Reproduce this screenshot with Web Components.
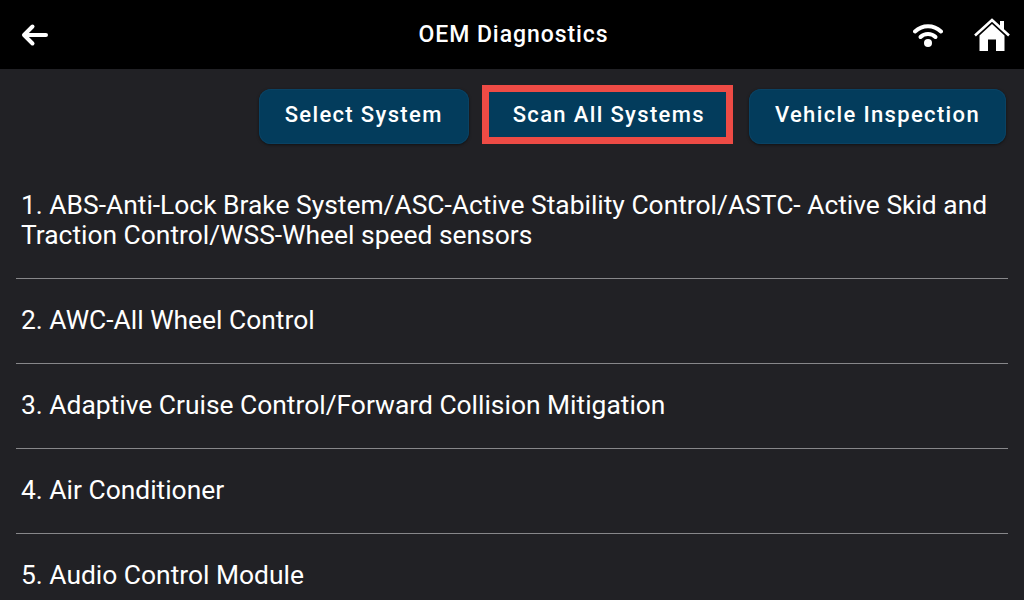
<!DOCTYPE html>
<html>
<head>
<meta charset="utf-8">
<style>
  html, body { margin: 0; height: 100%; background: #212125; overflow: hidden; }
  body { font-family: Roboto, "Liberation Sans", sans-serif; color: #fff; }
</style>
</head>
<body>
<oem-screen>
  <app-header slot="header" title="OEM Diagnostics"></app-header>
  <action-button>Select System</action-button>
  <action-button active>Scan All Systems</action-button>
  <action-button>Vehicle Inspection</action-button>
  <system-row slot="list">1. ABS-Anti-Lock Brake System/ASC-Active Stability Control/ASTC- Active Skid and Traction Control/WSS-Wheel speed sensors</system-row>
  <system-row slot="list">2. AWC-All Wheel Control</system-row>
  <system-row slot="list">3. Adaptive Cruise Control/Forward Collision Mitigation</system-row>
  <system-row slot="list">4. Air Conditioner</system-row>
  <system-row slot="list">5. Audio Control Module</system-row>
</oem-screen>
<script>
class OemScreen extends HTMLElement {
    constructor() {
        super();
        this.attachShadow({ mode: 'open' });
        this.shadowRoot.innerHTML = /*html*/ `
        <style>
            :host { display: flex; flex-direction: column; height: 600px; overflow: hidden; }
            .acciones {
                display: flex;
                justify-content: flex-end;
                align-items: flex-end;
                padding: 16px 18px 20px 0;
                flex: none;
            }
            .lista { display: flex; flex-direction: column; padding: 0 16px; flex: none; }
        </style>
        <slot name="header"></slot>
        <div class="acciones"><slot></slot></div>
        <div class="lista"><slot name="list"></slot></div>
        `;
    }
}
class AppHeader extends HTMLElement {
    connectedCallback() {
        this.attachShadow({ mode: 'open' });
        this.shadowRoot.innerHTML = /*html*/ `
        <style>
            :host {
                display: grid;
                grid-template-columns: 1fr auto 1fr;
                align-items: center;
                height: 69px;
                background: #000;
                flex: none;
            }
            .izq { padding-left: 21px; display: flex; }
            .titulo { font-size: 23px; font-weight: 500; letter-spacing: 0.93px; padding-left: 3px; }
            .der { display: flex; justify-content: flex-end; align-items: center; gap: 31px; padding-right: 14px; }
            svg { display: block; fill: #fff; }
        </style>
        <div class="izq">
            <svg width="27" height="24" viewBox="0 0 27 24" fill="none">
                <path d="M11.5 3.5 3 12l8.5 8.500M3.500 12H25" fill="none" stroke="#fff" stroke-width="4" stroke-linecap="round" stroke-linejoin="round"/>
            </svg>
        </div>
        <div class="titulo">${this.getAttribute('title')}</div>
        <div class="der">
            <svg width="30" height="26" viewBox="0 0 30 26">
                <path d="M2 9.500C9.500 2.500 20.500 2.500 28 9.500" fill="none" stroke="#fff" stroke-width="4" stroke-linecap="round"/>
                <path d="M7.500 15C11.500 11 18.500 11 22.500 15" fill="none" stroke="#fff" stroke-width="4" stroke-linecap="round"/>
                <circle cx="15" cy="21" r="4"/>
            </svg>
            <svg width="36" height="34" viewBox="0 0 36 34">
                <path d="M26 3h4v9l-4-3.500z"/>
                <path d="M1 17.500 18 2l17 15.500" fill="none" stroke="#fff" stroke-width="2.600"/>
                <path d="M18 6 5.500 17.500V33H14V21.500h8V33h8.500V17.500z"/>
            </svg>
        </div>
        `;
    }
}
class ActionButton extends HTMLElement {
    constructor() {
        super();
        this.attachShadow({ mode: 'open' });
        this.shadowRoot.innerHTML = /*html*/ `
        <style>
            :host {
                display: flex;
                align-items: center;
                height: 55px;
                box-sizing: border-box;
                padding: 0 26px 4px;
                margin-left: 13px;
                background: #033c5c;
                border-radius: 12px;
                font-size: 22px;
                font-weight: 500;
                letter-spacing: 1.35px;
                white-space: nowrap;
                box-shadow: inset 0 0 0 1px #0a4263, 0 1px 3px rgba(0,0,0,.5);
            }
            :host([active]) {
                height: 59px;
                border: 7px solid #ee4b45;
                border-radius: 0;
                padding: 0 21px 0 24px;
                margin-right: 3px;
                box-shadow: none;
            }
        </style>
        <slot></slot>
        `;
    }
}
class SystemRow extends HTMLElement {
    constructor() {
        super();
        this.attachShadow({ mode: 'open' });
        this.shadowRoot.innerHTML = /*html*/ `
        <style>
            :host {
                display: block;
                padding: 26px 5px 28px;
                font-size: 26.4px;
                line-height: 30px;
                border-bottom: 1px solid #87878a;
            }
        </style>
        <slot></slot>
        `;
    }
}
customElements.define('oem-screen', OemScreen);
customElements.define('app-header', AppHeader);
customElements.define('action-button', ActionButton);
customElements.define('system-row', SystemRow);
</script>
</body>
</html>
